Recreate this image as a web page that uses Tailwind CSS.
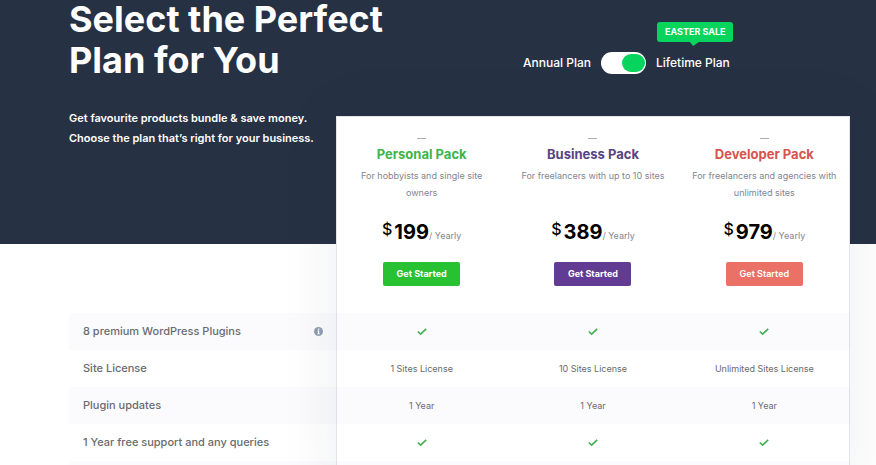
<!DOCTYPE html>
<html lang="en">
<head>
    <meta charset="UTF-8">
    <meta name="viewport" content="width=device-width, initial-scale=1.0">
    <title>Select the Perfect Plan for You</title>
    <script src="https://cdn.jsdelivr.net/npm/@tailwindcss/browser@4"></script>
</head>
<body class="h-screen overflow-hidden bg-white font-['Inter',sans-serif] text-[#686b70]">

<header class="bg-[#273144] pl-[69px] pr-[26px] pb-24 text-white">
    <div class="grid grid-cols-[454px_1fr]">
        <div>
            <h1 class="-mt-px text-4xl leading-[41px] font-bold">Select the Perfect<br>Plan for You</h1>
            <p class="mt-[27px] text-[11px] leading-5 font-semibold">Get favourite products bundle &amp; save money.<br>Choose the plan that’s right for your business.</p>
        </div>

        <div class="flex items-center gap-2.5 self-start pt-[52px] text-xs leading-[22px] font-medium">
            <label for="plan-toggle">Annual Plan</label>
            <input id="plan-toggle" type="checkbox" role="switch" checked
                   class="flex h-[22px] w-[45px] appearance-none items-center rounded-full bg-white px-px before:h-[18px] before:w-[23px] before:rounded-full before:bg-[#06d45c] before:content-[''] checked:justify-end">
            <label for="plan-toggle" class="relative">
                Lifetime Plan
                <span class="absolute bottom-8 left-px rounded-[3px] bg-[#06d45c] px-2 text-[9px] leading-5 font-bold whitespace-nowrap">
                    EASTER SALE
                    <svg class="absolute top-5 left-8 h-1 w-2.5" viewBox="0 0 10 4" fill="#06d45c"><path d="M1 0h9L4 4z"/></svg>
                </span>
            </label>
        </div>
    </div>
</header>

<main class="relative -mt-32 grid grid-cols-[267px_1fr] pl-[69px] pr-[26px]">
    <!-- white card behind the three plan columns -->
    <div class="col-start-2 row-start-1 border border-[#e4e5ea] bg-white shadow-[0_0_56px_rgba(30,35,60,0.08)]"></div>

    <table class="relative col-span-2 col-start-1 row-start-1 w-full table-fixed text-center">
        <colgroup>
            <col class="w-[267px]">
            <col>
            <col>
            <col>
        </colgroup>
        <thead>
            <tr class="h-[197px] align-top">
                <td></td>
                <th scope="col" class="px-3 pt-[22px] font-normal">
                    <span class="mx-auto block h-px w-[9px] bg-[#a9adb3]"></span>
                    <h2 class="mt-[3px] mb-px text-[13px] leading-6 font-bold text-[#3db54a]">Personal Pack</h2>
                    <p class="h-[34px] text-[9px] leading-[17px] text-[#808692]">For hobbyists and single site owners</p>
                    <p class="mt-[17px] flex items-baseline justify-center leading-7 text-black">
                        <span class="mr-0.5 self-start text-base leading-[22px] font-medium">$</span>
                        <span class="text-xl leading-7 font-bold">199</span>
                        <span class="text-[9px] text-[#808692]">/ Yearly</span>
                    </p>
                    <button type="button" class="mt-3 h-6 w-[77px] rounded-xs bg-[#28c131] text-[9px] font-bold text-white">Get Started</button>
                </th>
                <th scope="col" class="px-3 pt-[22px] font-normal">
                    <span class="mx-auto block h-px w-[9px] bg-[#a9adb3]"></span>
                    <h2 class="mt-[3px] mb-px text-[13px] leading-6 font-bold text-[#574483]">Business Pack</h2>
                    <p class="h-[34px] text-[9px] leading-[17px] text-[#808692]">For freelancers with up to 10 sites</p>
                    <p class="mt-[17px] flex items-baseline justify-center leading-7 text-black">
                        <span class="mr-0.5 self-start text-base leading-[22px] font-medium">$</span>
                        <span class="text-xl leading-7 font-bold">389</span>
                        <span class="text-[9px] text-[#808692]">/ Yearly</span>
                    </p>
                    <button type="button" class="mt-3 h-6 w-[77px] rounded-xs bg-[#623c92] text-[9px] font-bold text-white">Get Started</button>
                </th>
                <th scope="col" class="px-3 pt-[22px] font-normal">
                    <span class="mx-auto block h-px w-[9px] bg-[#a9adb3]"></span>
                    <h2 class="mt-[3px] mb-px text-[13px] leading-6 font-bold text-[#d5544e]">Developer Pack</h2>
                    <p class="h-[34px] text-[9px] leading-[17px] text-[#808692]">For freelancers and agencies with unlimited sites</p>
                    <p class="mt-[17px] flex items-baseline justify-center leading-7 text-black">
                        <span class="mr-0.5 self-start text-base leading-[22px] font-medium">$</span>
                        <span class="text-xl leading-7 font-bold">979</span>
                        <span class="text-[9px] text-[#808692]">/ Yearly</span>
                    </p>
                    <button type="button" class="mt-3 h-6 w-[77px] rounded-xs bg-[#eb7065] text-[9px] font-semibold text-white">Get Started</button>
                </th>
            </tr>
        </thead>
        <tbody class="text-[9px]">
            <tr class="h-[37px] bg-[#282896]/2">
                <th scope="row" class="pr-[13px] pl-3.5 text-left text-[11px] font-medium">
                    <div class="flex items-center justify-between">
                        8 premium WordPress Plugins
                        <svg class="size-[9px]" viewBox="0 0 9 9" role="img" aria-label="Info"><circle cx="4.500" cy="4.500" r="4.500" fill="#8e9bae"/><path d="M4 1.500h1.200v1.200H4zM3.500 3.600h1.700v2.800h.6v.8H3.400v-.8H4V4.400h-.5z" fill="#fff"/></svg>
                    </div>
                </th>
                <td><svg class="mx-auto h-2 w-2.5" viewBox="0 0 10 8" fill="none" stroke="#43ae52" stroke-width="1.600" role="img" aria-label="Included"><path d="M.8 3.500l2.800 2.700L9.200.8"/></svg></td>
                <td><svg class="mx-auto h-2 w-2.5" viewBox="0 0 10 8" fill="none" stroke="#43ae52" stroke-width="1.600" role="img" aria-label="Included"><path d="M.8 3.500l2.800 2.700L9.200.8"/></svg></td>
                <td><svg class="mx-auto h-2 w-2.5" viewBox="0 0 10 8" fill="none" stroke="#43ae52" stroke-width="1.600" role="img" aria-label="Included"><path d="M.8 3.500l2.800 2.700L9.200.8"/></svg></td>
            </tr>
            <tr class="h-[37px]">
                <th scope="row" class="pl-3.5 text-left text-[11px] font-medium">Site License</th>
                <td>1 Sites License</td>
                <td>10 Sites License</td>
                <td>Unlimited Sites License</td>
            </tr>
            <tr class="h-[37px] bg-[#282896]/2">
                <th scope="row" class="pl-3.5 text-left text-[11px] font-medium">Plugin updates</th>
                <td>1 Year</td>
                <td>1 Year</td>
                <td>1 Year</td>
            </tr>
            <tr class="h-[37px]">
                <th scope="row" class="pl-3.5 text-left text-[11px] font-medium">1 Year free support and any queries</th>
                <td><svg class="mx-auto h-2 w-2.5" viewBox="0 0 10 8" fill="none" stroke="#43ae52" stroke-width="1.600" role="img" aria-label="Included"><path d="M.8 3.500l2.800 2.700L9.200.8"/></svg></td>
                <td><svg class="mx-auto h-2 w-2.5" viewBox="0 0 10 8" fill="none" stroke="#43ae52" stroke-width="1.600" role="img" aria-label="Included"><path d="M.8 3.500l2.800 2.700L9.200.8"/></svg></td>
                <td><svg class="mx-auto h-2 w-2.5" viewBox="0 0 10 8" fill="none" stroke="#43ae52" stroke-width="1.600" role="img" aria-label="Included"><path d="M.8 3.500l2.800 2.700L9.200.8"/></svg></td>
            </tr>
            <tr class="h-[37px] bg-[#282896]/2">
                <td colspan="4"></td>
            </tr>
        </tbody>
    </table>
</main>

</body>
</html>
